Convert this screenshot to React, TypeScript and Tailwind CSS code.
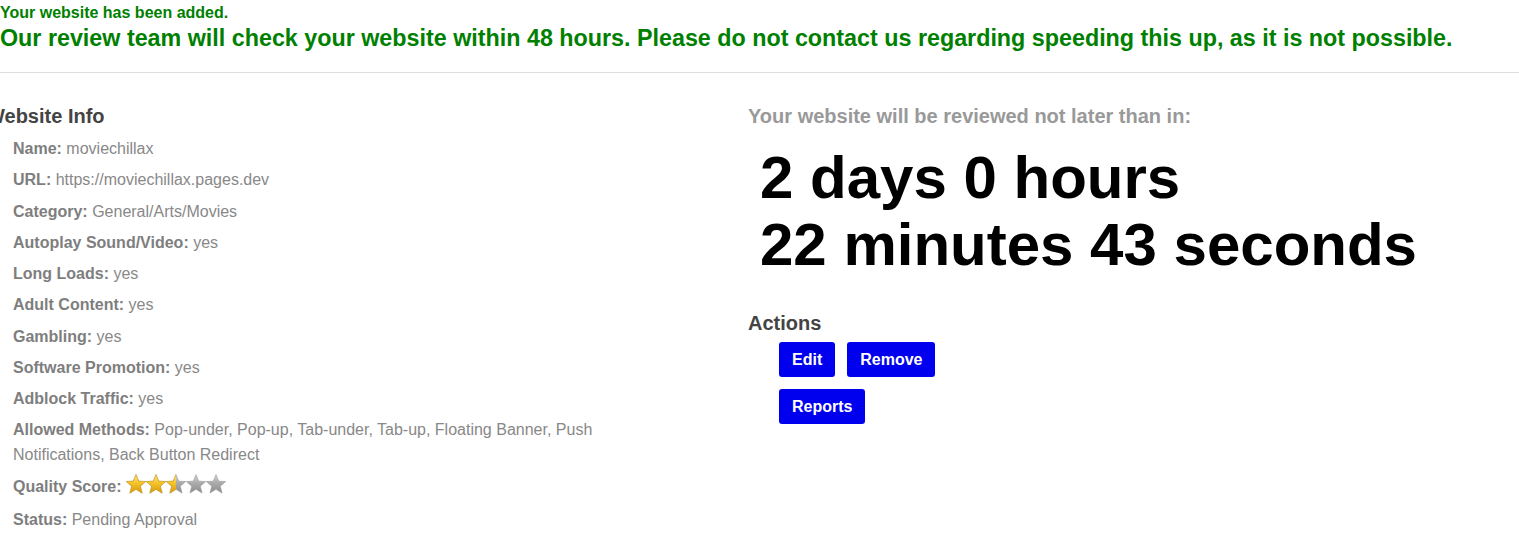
import { useId } from "react";

const info: [string, string][] = [
  ["Name", "moviechillax"],
  ["URL", "https://moviechillax.pages.dev"],
  ["Category", "General/Arts/Movies"],
  ["Autoplay Sound/Video", "yes"],
  ["Long Loads", "yes"],
  ["Adult Content", "yes"],
  ["Gambling", "yes"],
  ["Software Promotion", "yes"],
  ["Adblock Traffic", "yes"],
  ["Allowed Methods", "Pop-under, Pop-up, Tab-under, Tab-up, Floating Banner, Push Notifications, Back Button Redirect"],
];

const STAR = "M10 0.6L12.65 7.16L19.7 7.56L14.28 12.19L16.1 19.1L10 15.3L3.9 19.1L5.72 12.19L0.3 7.56L7.35 7.16Z";

function Stars({ score }: { score: number }) {
  const id = useId().replace(/:/g, "");
  return (
    <svg width="100" height="20" viewBox="0 0 100 20" className="inline-block align-[-2px]">
      <defs>
        <linearGradient id={`g${id}`} x1="0" y1="0" x2="0" y2="1">
          <stop offset="0" stopColor="#ffe58a" />
          <stop offset="0.45" stopColor="#f6c42a" />
          <stop offset="1" stopColor="#d9980a" />
        </linearGradient>
        <linearGradient id={`s${id}`} x1="0" y1="0" x2="0" y2="1">
          <stop offset="0" stopColor="#d6d6d6" />
          <stop offset="0.45" stopColor="#ababab" />
          <stop offset="1" stopColor="#8c8c8c" />
        </linearGradient>
        <clipPath id={`c${id}`}>
          <rect x="0" y="0" width={score * 20} height="20" />
        </clipPath>
      </defs>
      {[0, 1, 2, 3, 4].map((i) => (
        <path
          key={`b${i}`}
          d={STAR}
          transform={`translate(${i * 20} 0)`}
          fill={`url(#s${id})`}
          stroke="#9a9a9a"
          strokeWidth="0.6"
          strokeLinejoin="round"
        />
      ))}
      <g clipPath={`url(#c${id})`}>
        {[0, 1, 2, 3, 4].map((i) => (
          <path
            key={`f${i}`}
            d={STAR}
            transform={`translate(${i * 20} 0)`}
            fill={`url(#g${id})`}
            stroke="#d9a210"
            strokeWidth="0.6"
            strokeLinejoin="round"
          />
        ))}
      </g>
    </svg>
  );
}

export default function App() {
  return (
    <div className="w-[1519px] h-[539px] overflow-hidden bg-white font-['Liberation_Sans',Arial,sans-serif]">
      <div className="text-[#008000] font-bold pt-[4px] pb-[21px]">
        <p className="text-[16px] leading-[18px]">Your website has been added.</p>
        <p className="text-[23.3px] leading-[26px] mt-[3px]">
          Our review team will check your website within 48 hours. Please do not contact us regarding speeding this up, as it is not possible.
        </p>
      </div>
      <hr className="border-0 border-t border-[#dddddd]" />

      <div className="flex pt-[30px]">
        <div className="w-[748px] shrink-0">
          <h2 className="-ml-[14px] text-[20px] leading-[26px] font-bold text-[#444]">Website Info</h2>
          <ul className="mt-[7px] pl-[13px] w-[632px] flex flex-col gap-[6.25px] text-[16px] leading-[25px] text-[#888]">
            {info.map(([k, v]) => (
              <li key={k}>
                <b className="text-[#7e7e7e]">{k}:</b> {v}
              </li>
            ))}
            <li className="h-[27px]">
              <b className="text-[#7e7e7e]">Quality Score:</b> <Stars score={2.5} />
            </li>
            <li>
              <b className="text-[#7e7e7e]">Status:</b> Pending Approval
            </li>
          </ul>
        </div>

        <div className="flex-1">
          <h2 className="text-[20px] leading-[26px] font-bold text-[#999]">Your website will be reviewed not later than in:</h2>
          <div className="mt-[15px] pl-[12px] text-[60px] leading-[67px] font-bold text-black">
            <div>2 days 0 hours</div>
            <div>22 minutes 43 seconds</div>
          </div>
          <h2 className="mt-[32px] text-[20px] leading-[26px] font-bold text-[#444]">Actions</h2>
          <div className="mt-[6px] pl-[31px] w-[220px] flex flex-wrap gap-[12px]">
            {["Edit", "Remove", "Reports"].map((b) => (
              <button
                key={b}
                className="h-[35px] px-[13px] rounded-[3px] bg-[#0000ee] text-white font-bold text-[16px]"
              >
                {b}
              </button>
            ))}
          </div>
        </div>
      </div>
    </div>
  );
}
